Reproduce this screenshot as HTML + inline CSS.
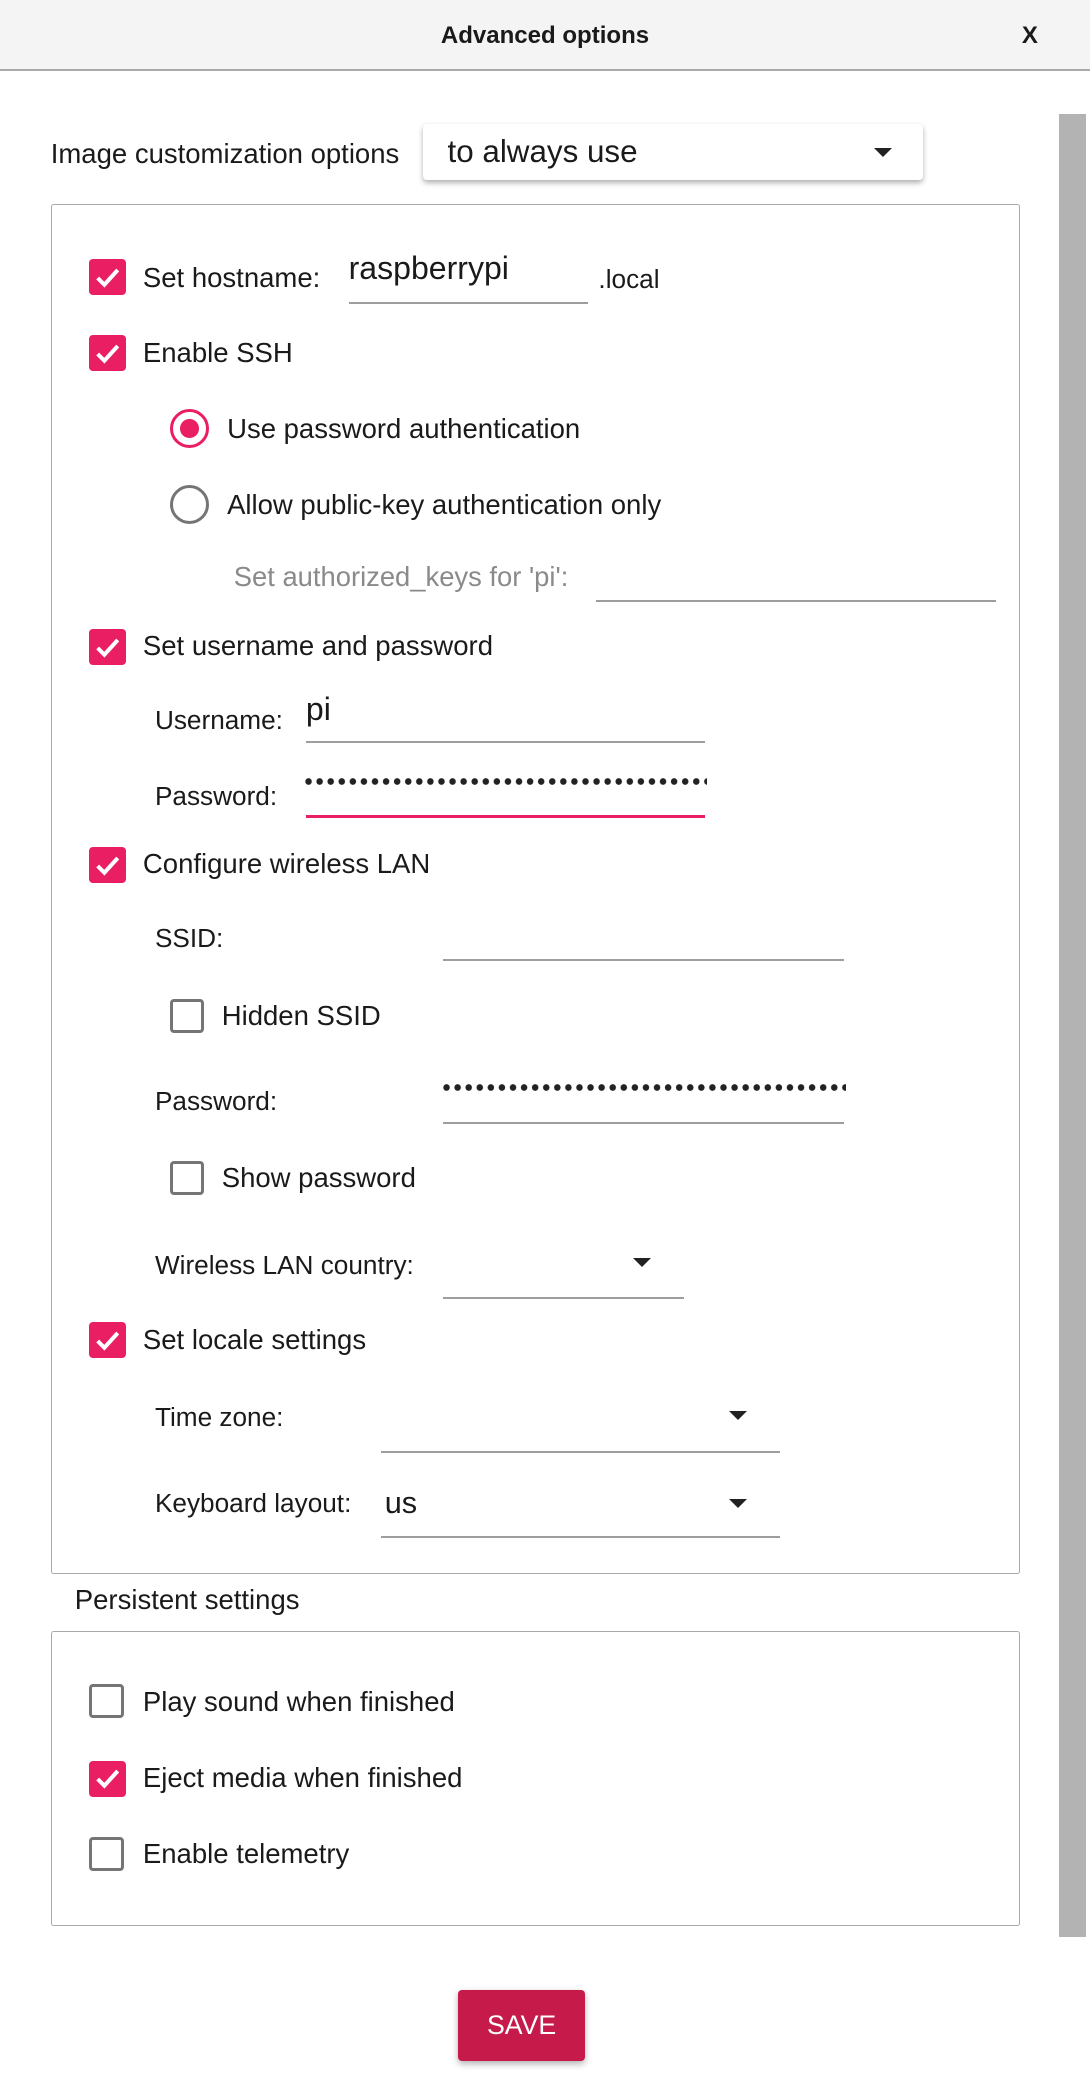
<!DOCTYPE html>
<html><head><meta charset="utf-8"><style>
html,body{margin:0;padding:0;background:#fff;}
#w{position:relative;width:816px;height:1568px;zoom:1.33578;overflow:hidden;font-family:"Liberation Sans",Arial,sans-serif;color:#1a1a1a;}
.a{position:absolute;}
.t{position:absolute;height:24px;line-height:24px;font-size:20.6px;white-space:nowrap;}
.s{font-size:19.6px;}
.cb{position:absolute;width:27px;height:27px;border-radius:3px;background:#e91e63;}
.cb svg{position:absolute;left:4px;top:5px;}
.ub{position:absolute;width:21px;height:21px;border:2.5px solid #757575;border-radius:3px;}
.ul{position:absolute;height:1.5px;background:#9e9e9e;}
.arr{position:absolute;width:0;height:0;border-left:7px solid transparent;border-right:7px solid transparent;border-top:7px solid #222;}
.dots{position:absolute;height:8px;background-image:radial-gradient(circle,#222 2.2px,transparent 2.6px);background-size:8.3px 8px;background-repeat:repeat-x;}
</style></head><body><div id="w">
<div class="a" style="left:0;top:0;width:816px;height:52px;background:#f4f4f4;border-bottom:2px solid #aaa;"></div>
<div class="t" style="left:0;width:816px;text-align:center;top:15px;font-weight:bold;font-size:18px;">Advanced options</div>
<div class="t" style="left:765px;top:15px;font-weight:bold;font-size:18px;">X</div>
<div class="a" style="left:793px;top:85px;width:20px;height:1365px;background:#b3b3b3;"></div>

<div class="t" style="left:38px;top:103px;">Image customization options</div>
<div class="a" style="left:317px;top:93px;width:374px;height:42px;background:#fff;border-radius:3px;box-shadow:0 2px 4px rgba(0,0,0,.3);"></div>
<div class="t" style="left:335px;top:102px;font-size:23.5px;">to always use</div>
<div class="arr" style="left:654px;top:111px;"></div>

<div class="a" style="left:38px;top:153px;width:724px;height:1024px;border:1px solid #aaa;border-radius:2px;"></div>

<div class="cb" style="left:67px;top:194px;"><svg width="19" height="17" viewBox="0 0 19 17"><path d="M2 9 L7 14 L17 3" stroke="#fff" stroke-width="3" fill="none"/></svg></div>
<div class="t" style="left:107px;top:196px;">Set hostname:</div>
<div class="t" style="left:261px;top:189px;font-size:24px;">raspberrypi</div>
<div class="ul" style="left:261px;top:226px;width:179px;"></div>
<div class="t" style="left:448px;top:197px;font-size:19.6px;">.local</div>

<div class="cb" style="left:67px;top:251px;"><svg width="19" height="17" viewBox="0 0 19 17"><path d="M2 9 L7 14 L17 3" stroke="#fff" stroke-width="3" fill="none"/></svg></div>
<div class="t" style="left:107px;top:252px;">Enable SSH</div>

<div class="a" style="left:127px;top:306px;width:25px;height:25px;border:2.5px solid #e91e63;border-radius:50%;"></div>
<div class="a" style="left:135px;top:314px;width:14px;height:14px;background:#e91e63;border-radius:50%;"></div>
<div class="t" style="left:170px;top:309px;">Use password authentication</div>
<div class="a" style="left:127px;top:363px;width:25px;height:25px;border:2.5px solid #757575;border-radius:50%;"></div>
<div class="t" style="left:170px;top:366px;">Allow public-key authentication only</div>
<div class="t" style="left:175px;top:420px;font-size:20.5px;color:#8a8a8a;">Set authorized_keys for 'pi':</div>
<div class="ul" style="left:446px;top:449px;width:300px;"></div>

<div class="cb" style="left:67px;top:471px;"><svg width="19" height="17" viewBox="0 0 19 17"><path d="M2 9 L7 14 L17 3" stroke="#fff" stroke-width="3" fill="none"/></svg></div>
<div class="t" style="left:107px;top:472px;">Set username and password</div>
<div class="t s" style="left:116px;top:527px;">Username:</div>
<div class="t" style="left:229px;top:519px;font-size:24px;">pi</div>
<div class="ul" style="left:229px;top:555px;width:299px;"></div>
<div class="t s" style="left:116px;top:584px;">Password:</div>
<div class="dots" style="left:227px;top:581px;width:302px;"></div>
<div class="a" style="left:229px;top:610px;width:299px;height:2.5px;background:#e91e63;"></div>

<div class="cb" style="left:67px;top:634px;"><svg width="19" height="17" viewBox="0 0 19 17"><path d="M2 9 L7 14 L17 3" stroke="#fff" stroke-width="3" fill="none"/></svg></div>
<div class="t" style="left:107px;top:635px;">Configure wireless LAN</div>
<div class="t s" style="left:116px;top:690px;">SSID:</div>
<div class="ul" style="left:332px;top:718px;width:300px;"></div>
<div class="ub" style="left:127px;top:748px;"></div>
<div class="t" style="left:166px;top:749px;">Hidden SSID</div>
<div class="t s" style="left:116px;top:812px;">Password:</div>
<div class="dots" style="left:330px;top:810px;width:303px;"></div>
<div class="ul" style="left:332px;top:840px;width:300px;"></div>
<div class="ub" style="left:127px;top:869px;"></div>
<div class="t" style="left:166px;top:870px;">Show password</div>
<div class="t s" style="left:116px;top:935px;">Wireless LAN country:</div>
<div class="arr" style="left:474px;top:942px;"></div>
<div class="ul" style="left:332px;top:971px;width:180px;"></div>

<div class="cb" style="left:67px;top:990px;"><svg width="19" height="17" viewBox="0 0 19 17"><path d="M2 9 L7 14 L17 3" stroke="#fff" stroke-width="3" fill="none"/></svg></div>
<div class="t" style="left:107px;top:991px;">Set locale settings</div>
<div class="t s" style="left:116px;top:1049px;">Time zone:</div>
<div class="arr" style="left:546px;top:1056px;"></div>
<div class="ul" style="left:285px;top:1086px;width:299px;"></div>
<div class="t s" style="left:116px;top:1113px;">Keyboard layout:</div>
<div class="t" style="left:288px;top:1113px;font-size:23px;">us</div>
<div class="arr" style="left:546px;top:1122px;"></div>
<div class="ul" style="left:285px;top:1150px;width:299px;"></div>

<div class="t" style="left:56px;top:1186px;">Persistent settings</div>
<div class="a" style="left:38px;top:1221px;width:724px;height:219px;border:1px solid #aaa;border-radius:2px;"></div>
<div class="ub" style="left:67px;top:1261px;"></div>
<div class="t" style="left:107px;top:1262px;">Play sound when finished</div>
<div class="cb" style="left:67px;top:1318px;"><svg width="19" height="17" viewBox="0 0 19 17"><path d="M2 9 L7 14 L17 3" stroke="#fff" stroke-width="3" fill="none"/></svg></div>
<div class="t" style="left:107px;top:1319px;">Eject media when finished</div>
<div class="ub" style="left:67px;top:1375px;"></div>
<div class="t" style="left:107px;top:1376px;">Enable telemetry</div>

<div class="a" style="left:343px;top:1490px;width:95px;height:53px;background:#c51a4a;border-radius:3px;box-shadow:0 2px 5px rgba(0,0,0,.3);"></div>
<div class="t" style="left:343px;width:95px;text-align:center;top:1504px;color:#fff;font-size:20px;">SAVE</div>
</div></body></html>
